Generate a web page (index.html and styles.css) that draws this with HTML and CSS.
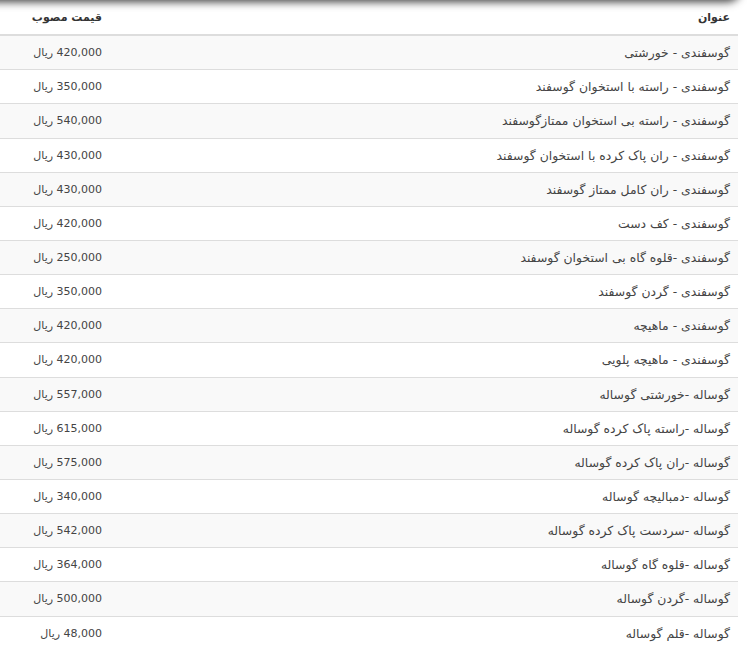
FILE: index.html
```html
<!DOCTYPE html>
<html lang="fa" dir="rtl">
<head>
<meta charset="utf-8">
<title>قیمت مصوب</title>
<link rel="stylesheet" href="styles.css">
</head>
<body>
<div class="page">
  <div class="top-shadow"></div>
  <table class="prices">
    <thead>
      <tr><th class="title">عنوان</th><th class="price">قیمت مصوب</th></tr>
    </thead>
    <tbody>
      <tr><td class="name">گوسفندی - خورشتی</td><td class="price">420,000 ریال</td></tr>
      <tr><td class="name">گوسفندی - راسته با استخوان گوسفند</td><td class="price">350,000 ریال</td></tr>
      <tr><td class="name">گوسفندی - راسته بی استخوان ممتازگوسفند</td><td class="price">540,000 ریال</td></tr>
      <tr><td class="name">گوسفندی - ران پاک کرده با استخوان گوسفند</td><td class="price">430,000 ریال</td></tr>
      <tr><td class="name">گوسفندی - ران کامل ممتاز گوسفند</td><td class="price">430,000 ریال</td></tr>
      <tr><td class="name">گوسفندی - کف دست</td><td class="price">420,000 ریال</td></tr>
      <tr><td class="name">گوسفندی -قلوه گاه بی استخوان گوسفند</td><td class="price">250,000 ریال</td></tr>
      <tr><td class="name">گوسفندی - گردن گوسفند</td><td class="price">350,000 ریال</td></tr>
      <tr><td class="name">گوسفندی - ماهیچه</td><td class="price">420,000 ریال</td></tr>
      <tr><td class="name">گوسفندی - ماهیچه پلویی</td><td class="price">420,000 ریال</td></tr>
      <tr><td class="name">گوساله -خورشتی گوساله</td><td class="price">557,000 ریال</td></tr>
      <tr><td class="name">گوساله -راسته پاک کرده گوساله</td><td class="price">615,000 ریال</td></tr>
      <tr><td class="name">گوساله -ران پاک کرده گوساله</td><td class="price">575,000 ریال</td></tr>
      <tr><td class="name">گوساله -دمبالیچه گوساله</td><td class="price">340,000 ریال</td></tr>
      <tr><td class="name">گوساله -سردست پاک کرده گوساله</td><td class="price">542,000 ریال</td></tr>
      <tr><td class="name">گوساله -قلوه گاه گوساله</td><td class="price">364,000 ریال</td></tr>
      <tr><td class="name">گوساله -گردن گوساله</td><td class="price">500,000 ریال</td></tr>
      <tr><td class="name">گوساله -قلم گوساله</td><td class="price">48,000 ریال</td></tr>
    </tbody>
  </table>
</div>
</body>
</html>
```
FILE: styles.css
```css
html, body {
  margin: 0;
  padding: 0;
  background: #ffffff;
}
body {
  font-family: "DejaVu Sans", Tahoma, sans-serif;
  font-size: 11px;
  line-height: 17.14px;
  color: #444444;
  overflow: hidden;
}
.page {
  position: relative;
  width: 747px;
  padding-top: 1px;
}
.top-shadow {
  position: absolute;
  top: -30px;
  right: 8px;
  width: 760px;
  height: 30px;
  border-bottom-right-radius: 12px;
  background: #ffffff;
  box-shadow: 0 0 9px 2px rgba(0, 0, 0, 0.75);
}
.prices {
  width: 738px;
  margin-right: 9px;
  border-collapse: collapse;
  border-spacing: 0;
  direction: rtl;
}
.prices th,
.prices td {
  padding: 8px;
  text-align: right;
  vertical-align: middle;
  font-weight: normal;
}
.prices th {
  font-weight: bold;
  color: #333333;
  border-bottom: 2px solid #dddddd;
}
.prices td {
  border-top: 1px solid #dddddd;
}
.prices td.name {
  font-size: 12.4px;
}
.prices tbody tr:nth-child(odd) td {
  background: #f9f9f9;
}
.prices .price {
  width: 94px;
  white-space: nowrap;
}
```
